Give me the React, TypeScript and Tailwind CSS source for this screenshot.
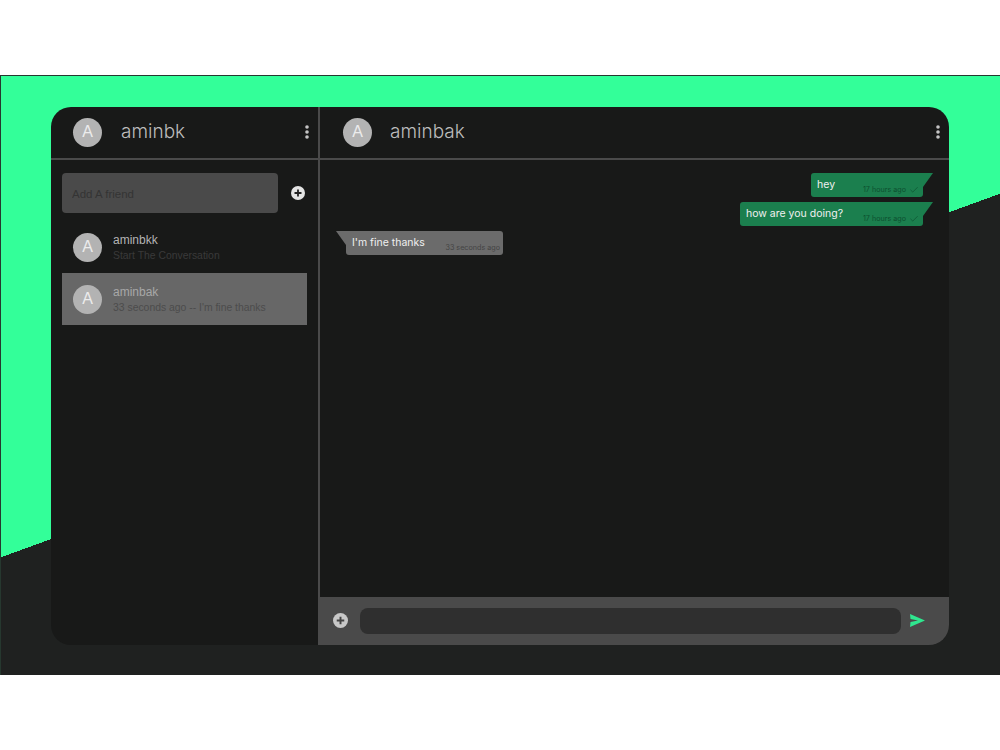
import { Check } from "lucide-react";

const heading = "font-['Inter',sans-serif]";

function Avatar() {
  return (
    <div className="flex h-[29px] w-[29px] shrink-0 items-center justify-center rounded-full bg-[#b3b3b3] text-base text-[#ececec]">
      A
    </div>
  );
}

function Dots() {
  return (
    <svg width="4" height="14" viewBox="0 0 4 14" className="shrink-0 fill-[#c4c4c4]">
      <circle cx="2" cy="2" r="1.8" />
      <circle cx="2" cy="7" r="1.8" />
      <circle cx="2" cy="12" r="1.8" />
    </svg>
  );
}

function PlusCircle({ size, bg, fg }: { size: number; bg: string; fg: string }) {
  return (
    <svg width={size} height={size} viewBox="0 0 14 14" className="shrink-0">
      <circle cx="7" cy="7" r="7" fill={bg} />
      <path d="M7 3.5v7M3.5 7h7" stroke={fg} strokeWidth="1.8" />
    </svg>
  );
}

function Contact({ name, sub, active }: { name: string; sub: string; active?: boolean }) {
  return (
    <div className={`flex h-[52px] items-center gap-[11px] pl-[11px] ${active ? "bg-[#676767]" : ""}`}>
      <Avatar />
      <div className="leading-[15px]">
        <div className={`text-xs ${active ? "text-[#a8a8a8]" : "text-[#b4b4b4]"}`}>{name}</div>
        <div className={`text-[10.4px] ${active ? "text-[#4c4c4c]" : "text-[#3a3a3a]"}`}>{sub}</div>
      </div>
    </div>
  );
}

function Bubble({ text, time, width, mine }: { text: string; time: string; width: string; mine?: boolean }) {
  return (
    <div className={`relative flex h-6 justify-between rounded-[3px] px-1.5 ${heading} ${width} ${mine ? "self-end rounded-tr-none bg-[#1b7f4e]" : "self-start rounded-tl-none bg-[#6b6b6b]"}`}>
      {mine ? (
        <div className="absolute -right-2.5 top-0 h-[14px] w-2.5 bg-[#1b7f4e] [clip-path:polygon(0_0,100%_0,0_100%)]" />
      ) : (
        <div className="absolute -left-2.5 top-0 h-[14px] w-2.5 bg-[#6b6b6b] [clip-path:polygon(0_0,100%_0,100%_100%)]" />
      )}
      <span className="mt-1 text-[10.5px] leading-[15px] text-[#f0f0f0]">{text}</span>
      <span className={`mt-[10px] flex items-center gap-[3px] text-[7.2px] leading-[10px] ${mine ? "-mr-0.5 text-[#0c4f2f]" : "-mr-[3px] text-[#444444]"}`}>
        {time}
        {mine && <Check size={10} strokeWidth={1.5} className="shrink-0 text-[#0c4f2f]" />}
      </span>
    </div>
  );
}

export default function App() {
  return (
    <div className="min-h-[750px] bg-white pt-[75px] font-['Liberation_Sans',sans-serif]">
      <div className="h-[600px] border-l border-t border-[#26382f] bg-[linear-gradient(160deg,#33ff99_50%,#1f2120_50%)] pl-[50px] pr-[51px] pt-[31px]">
        <div className="flex h-[538px] overflow-hidden rounded-[20px] bg-[#181918]">
          <div className="flex w-[267px] shrink-0 flex-col">
            <div className="flex h-[53px] shrink-0 items-center justify-between border-b-2 border-[#4a4a4a] pb-px pl-[22px] pr-[9px]">
              <div className="flex items-center gap-[19px]">
                <Avatar />
                <span className={`${heading} text-[19px] font-light text-[#bdbdbd]`}>aminbk</span>
              </div>
              <Dots />
            </div>
            <div className="flex items-center justify-between pl-[11px] pr-[13px] pt-[13px]">
              <input
                placeholder="Add A friend"
                className="h-10 w-[216px] rounded-sm bg-[#4a4a4a] px-2.5 pt-0.5 text-[11.5px] placeholder:text-[#343434]"
              />
              <PlusCircle size={14} bg="#e4e4e4" fg="#222222" />
            </div>
            <div className="ml-[11px] mr-[11px] mt-2 flex flex-col">
              <Contact name="aminbkk" sub="Start The Conversation" />
              <Contact name="aminbak" sub="33 seconds ago -- I'm fine thanks" active />
            </div>
          </div>
          <div className="flex min-w-0 flex-1 flex-col">
            <div className="flex h-[53px] shrink-0 items-center justify-between border-b-2 border-l-2 border-[#4a4a4a] pb-px pl-[23px] pr-[9px]">
              <div className="flex items-center gap-[18px]">
                <Avatar />
                <span className={`${heading} text-[19px] font-light text-[#bdbdbd]`}>aminbak</span>
              </div>
              <Dots />
            </div>
            <div className="flex flex-1 flex-col gap-[5px] border-l-2 border-[#4a4a4a] pl-[26px] pr-[26px] pt-[13px]">
              <Bubble text="hey" time="17 hours ago" width="w-[112px]" mine />
              <Bubble text="how are you doing?" time="17 hours ago" width="w-[183px]" mine />
              <Bubble text="I'm fine thanks" time="33 seconds ago" width="w-[157px]" />
            </div>
            <div className="flex h-12 shrink-0 items-center bg-[#4a4a4a] pb-px pl-[15px] pr-6">
              <PlusCircle size={15} bg="#c8c8c8" fg="#444444" />
              <input className="ml-[12px] mr-[9px] h-[26px] min-w-0 flex-1 rounded-lg bg-[#2f2f2f]" />
              <svg width="15" height="13" viewBox="0 0 15 13" className="shrink-0">
                <path d="M0 0 15 6.5 0 13 0.5 8 8 6.5 0.5 5Z" fill="#2fe68f" />
              </svg>
            </div>
          </div>
        </div>
      </div>
    </div>
  );
}
